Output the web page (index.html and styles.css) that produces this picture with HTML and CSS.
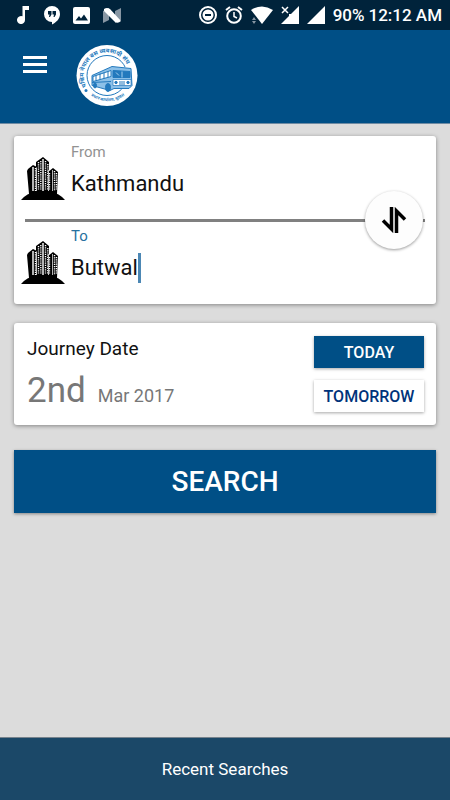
FILE: index.html
```html
<!DOCTYPE html>
<html lang="en">
<head>
<meta charset="utf-8">
<meta name="viewport" content="width=device-width, initial-scale=1">
<title>Bus search</title>
<link rel="stylesheet" href="styles.css">
</head>
<body>
<svg class="defs" aria-hidden="true">
  <symbol id="city" viewBox="0 0 44 44">
    <path d="M0 44Q6 37 14 36H30Q38 37 44 44Z"/>
    <path d="M6 15L7 13L12 9L16 11V38H8ZM15 6L22 1L28 6V12L27 38H15ZM27 16L32 12L37 16L36 38H27Z"/>
    <path fill="#b5b5b5" d="M11 11H13V35H11ZM21 3H23V35H21ZM31 14H32V35H31Z"/>
    <g stroke="#fff" stroke-width="1.400" fill="none" stroke-dasharray="1.200 1">
      <path d="M14.500 12V35M17.500 6V34M19.800 5V34M24.500 5V34M26.800 8V34M28.500 17V34M33.500 15V35M35.500 17V34"/>
    </g>
    <path fill="#ccc" d="M15 11L16 12V35H15ZM27 14H28V35H27Z"/>
  </symbol>
</svg>

<div class="status">
  <div class="notes">
    <svg width="14" height="18" viewBox="0 0 14 18"><path fill="#fff" d="M5.500 0H12V4H8V14A4 4 0 1 1 5.500 10.300Z"/></svg>
    <svg width="16" height="19" viewBox="0 0 16 19"><path fill="#fff" d="M8 0A8 8 0 0 1 16 8C16 13 12 16.500 8 18.500V16A8 8 0 0 1 8 0Z"/><path fill="#00233b" d="M4 5H7.500V8.500L6 11H5L5.500 8.500H4ZM8.500 5H12V8.500L10.500 11H9.500L10 8.500H8.500Z"/></svg>
    <svg width="17" height="17" viewBox="0 0 17 17"><rect width="17" height="17" rx="2" fill="#fff"/><path fill="#00233b" d="M2.500 13.500L6 9L8 11.500L11 7.500L15 13.500Z"/></svg>
    <svg width="18" height="15" viewBox="0 0 18 15"><path fill="#8796a3" d="M0 3L6 0V12L0 15ZM12 3L18 0V12L12 15Z"/><path fill="#fff" d="M1 1Q4 -1 7 1L18 13Q15 16 12 14L1 3Z"/></svg>
  </div>
  <div class="signals">
    <svg width="18" height="18" viewBox="0 0 18 18"><circle cx="9" cy="9" r="8" fill="none" stroke="#fff" stroke-width="2"/><circle cx="9" cy="9" r="5.500" fill="#fff"/><path stroke="#00233b" stroke-width="2" d="M6 9H12"/></svg>
    <svg width="18" height="18" viewBox="0 0 18 18" fill="none" stroke="#fff" stroke-width="2"><circle cx="9" cy="10" r="6.800"/><path d="M1 4L5 1M17 4L13 1"/><path stroke-width="1.500" d="M9 6V10.500L12 12"/></svg>
    <svg width="22" height="18" viewBox="0 0 22 18"><path fill="#fff" d="M0 4Q11 -3 22 4L11 18Z"/><path fill="#8796a3" d="M1 14L3 11L5 14ZM1 15H5L3 18Z"/></svg>
    <svg width="18" height="18" viewBox="0 0 18 18"><path fill="#fff" d="M18 0V18H0L8 10V8H10Z"/><path stroke="#fff" stroke-width="1.500" d="M1 1L7 7M7 1L1 7"/></svg>
    <svg width="18" height="18" viewBox="0 0 18 18"><path fill="#fff" d="M18 0V18H0Z"/></svg>
    <span class="clock"><span>90%</span><span>12:12 AM</span></span>
  </div>
</div>

<header class="bar">
  <button class="menu" type="button" aria-label="Menu">
    <svg width="24" height="18" viewBox="0 0 24 18"><path fill="#fff" d="M0 0H24V3H0ZM0 7H24V10H0ZM0 14H24V17H0Z"/></svg>
  </button>
  <svg class="logo" viewBox="0 0 62 62" role="img" aria-label="Bus association">
    <defs>
      <path id="arcTop" d="M10.500 42A23 23 0 1 1 53 37"/>
      <path id="arcLow" d="M13 49A26.500 26.500 0 0 0 53 46"/>
    </defs>
    <circle cx="31" cy="31" r="30.500" fill="#fff"/>
    <circle cx="31" cy="31" r="20" fill="none" stroke="#2379bd"/>
    <text class="ring" font-size="6"><textPath href="#arcTop">पश्चिम नेपाल बस व्यवसायी संघ</textPath></text>
    <text class="ring" font-size="4"><textPath href="#arcLow" startOffset="3">प्रधान कार्यालय, बुटवल</textPath></text>
    <circle cx="10" cy="46" r="1.500" fill="#2379bd"/>
    <path fill="#fff" d="M42 22L55 23L58 43L42 45Z"/>
    <g stroke="#2379bd" stroke-linejoin="round">
      <path fill="#8cc0e8" d="M16 31L36 22L55 24L56 41L53 44L38 44L34 46L16 41Z"/>
      <path fill="#fff" d="M17 32L35 26V32L17 37Z"/>
      <path d="M20 31V36M24 29V35M28 28V34M32 27V33M16 38L35 37" fill="none"/>
      <path fill="#2379bd" d="M37 26L54 27V33L37 33Z"/>
      <path fill="#fff" stroke-width=".7" d="M37 35L55 35V41L37 41Z"/>
      <path fill="none" stroke="#a7d1f0" d="M46 27V33M40 28L43 31"/>
      <circle cx="40" cy="38" r="1.200" fill="#2379bd"/><circle cx="52" cy="38" r="1.200" fill="#2379bd"/>
      <path fill="none" d="M43 37.500H49M43 39.500H49"/>
      <ellipse cx="32" cy="43" rx="2.500" ry="4" fill="#2379bd"/>
      <ellipse cx="19" cy="41" rx="1.500" ry="2.500" fill="#2379bd"/>
    </g>
  </svg>
</header>

<main class="content">
  <form class="search">
    <section class="card route">
      <div class="place">
        <svg class="city"><use href="#city"/></svg>
        <div class="field">
          <label for="from">From</label>
          <div class="entry"><input id="from" type="text" value="Kathmandu"></div>
        </div>
      </div>
      <div class="divider">
        <button class="swap" type="button" aria-label="Swap places">
          <svg width="26" height="26" viewBox="0 0 26 26" fill="none" stroke="#000" stroke-width="3.500"><path d="M10.500 0V22L2 13.500M15.500 26V4L24 12.500"/></svg>
        </button>
      </div>
      <div class="place">
        <svg class="city"><use href="#city"/></svg>
        <div class="field active">
          <label for="to">To</label>
          <div class="entry"><input id="to" type="text" value="Butwal" size="6"><span class="caret"></span></div>
        </div>
      </div>
    </section>

    <section class="card journey">
      <div class="date">
        <h2>Journey Date</h2>
        <p><span class="day">2nd</span><span class="month">Mar 2017</span></p>
      </div>
      <div class="choices">
        <button class="chip chosen" type="button">TODAY</button>
        <button class="chip" type="button">TOMORROW</button>
      </div>
    </section>

    <button class="submit" type="button">SEARCH</button>
  </form>
</main>

<footer class="foot"><button class="recent" type="button">Recent Searches</button></footer>
</body>
</html>
```
FILE: styles.css
```css
* { box-sizing: border-box; }

body {
  margin: 0;
  min-height: 100vh;
  display: flex;
  flex-direction: column;
  background: #dcdcdc;
  color: #111;
  font-family: Roboto, "Noto Sans", sans-serif;
}

button, input { font: inherit; border: 0; padding: 0; margin: 0; }
svg { display: block; flex: none; }
.defs { position: absolute; width: 0; height: 0; }

.status {
  display: flex;
  justify-content: space-between;
  align-items: center;
  height: 30px;
  padding: 0 8px 0 17px;
  background: #00233b;
  color: #fff;
}
.notes, .signals { display: flex; align-items: center; }
.notes { gap: 13px; }
.signals { gap: 8px; }
.clock { display: flex; gap: 4px; font-size: 17px; font-weight: 500; white-space: nowrap; }

.bar {
  display: flex;
  align-items: flex-start;
  gap: 28px;
  padding: 14px 22px 16px;
  background: #004f86;
  border-bottom: 1px solid #6f8ba3;
}
.menu { padding: 12px 1px; background: none; }
.logo { width: 62px; height: 63px; }
.ring { fill: #2379bd; font-family: "Noto Sans Devanagari", "Noto Sans", sans-serif; font-weight: 700; }

.content { flex: 1; padding: 12px 14px; }
.search { display: flex; flex-direction: column; }

.card {
  background: #fff;
  border-radius: 3px;
  box-shadow: 0 1px 4px rgba(0, 0, 0, .4);
}

.route { padding: 7px 0 14px; }
.place { display: flex; align-items: flex-end; gap: 6px; padding-left: 7px; }
.city { width: 44px; height: 44px; margin-bottom: 6px; }
.field { flex: 1; min-width: 0; }
.field label { display: block; font-size: 15px; line-height: 18px; color: #929292; }
.entry { display: flex; align-items: center; height: 45px; }
.entry input {
  flex: 1;
  min-width: 0;
  background: none;
  color: #111;
  font-size: 22px;
  line-height: 30px;
  outline: 0;
}
.field.active label { color: #27719f; }
.active input { flex: none; field-sizing: content; }
.caret { width: 3px; height: 30px; background: #4c87b4; }

.divider { position: relative; height: 3px; margin: 13px 11px 5px; background: #808080; }
.swap {
  position: absolute;
  top: -28px;
  right: 2px;
  width: 58px;
  height: 58px;
  display: grid;
  place-items: center;
  background: #fdfdfd;
  border-radius: 50%;
  box-shadow: 0 1px 3px rgba(0, 0, 0, .4);
}

.journey {
  display: flex;
  justify-content: space-between;
  margin-top: 19px;
  padding: 13px 12px 13px 13px;
}
.date h2 { margin: 0; font-size: 19px; line-height: 26px; font-weight: 400; }
.date p { display: flex; align-items: baseline; gap: 12px; margin: 8px 0 0; color: #777; }
.day { font-size: 35px; line-height: 42px; }
.month { font-size: 18px; }
.choices { display: flex; flex-direction: column; gap: 12px; width: 110px; }
.chip {
  height: 32px;
  background: #fff;
  color: #00337a;
  font-size: 16px;
  font-weight: 500;
  box-shadow: 0 1px 3px rgba(0, 0, 0, .35);
}
.chosen { background: #004f86; color: #fff; }

.submit {
  height: 63px;
  margin-top: 25px;
  background: #004f86;
  color: #fff;
  font-size: 28px;
  font-weight: 500;
  box-shadow: 0 1px 3px rgba(0, 0, 0, .4);
}

.foot { display: flex; background: #1b4868; border-top: 1px solid #77838d; }
.recent { flex: 1; height: 62px; background: none; color: #fff; font-size: 17px; }
```
